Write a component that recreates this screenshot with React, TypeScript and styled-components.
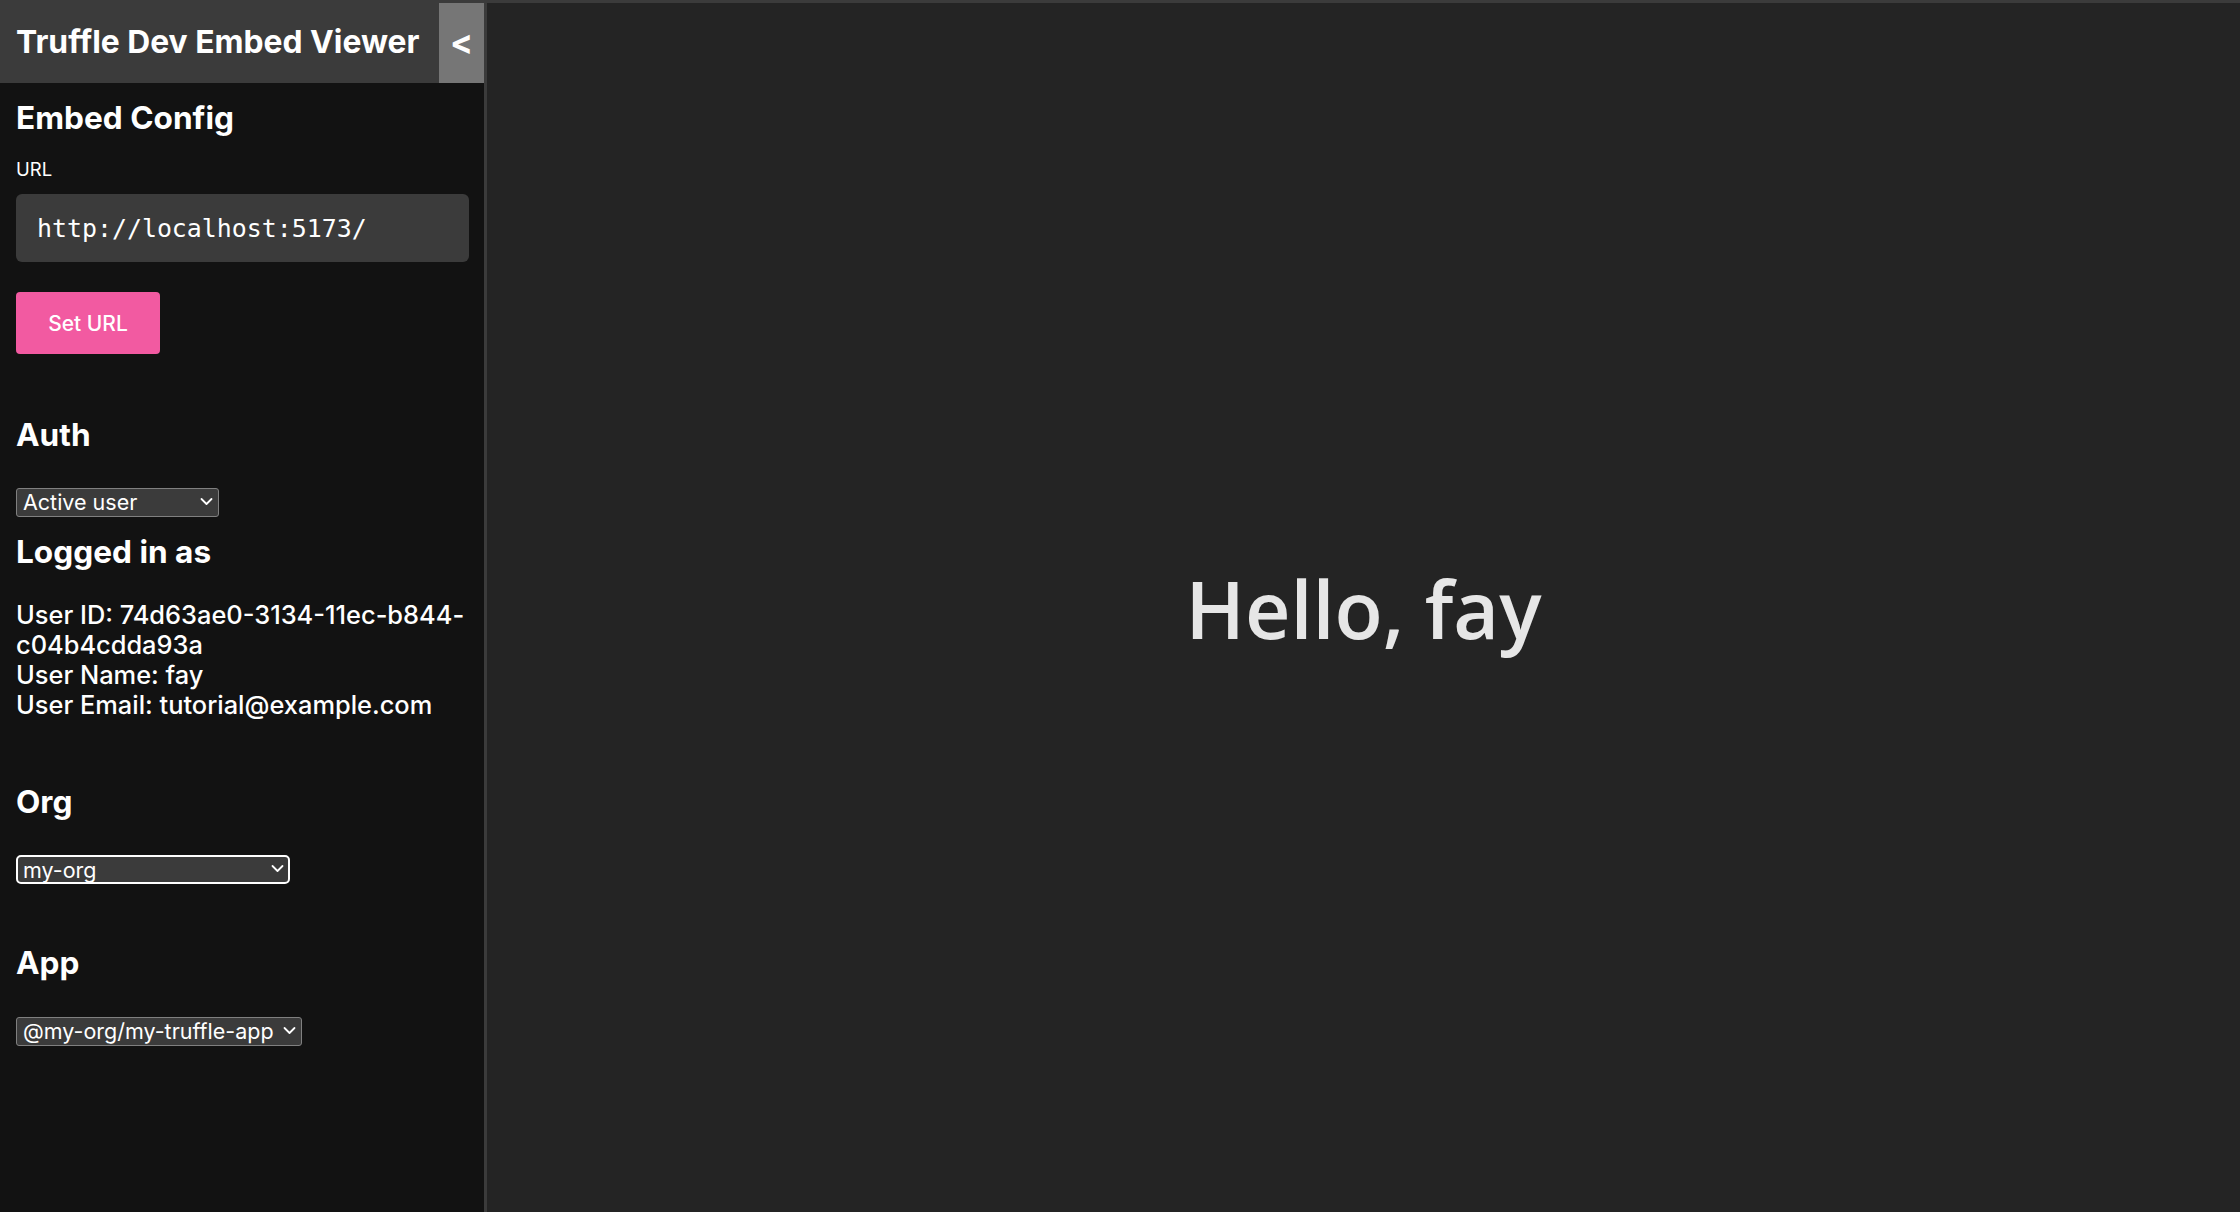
import React from "react";
import styled, { createGlobalStyle } from "styled-components";

const GlobalStyle = createGlobalStyle`
  html, body {
    margin: 0;
    padding: 0;
    height: 100%;
    background: #121212;
  }
  #root {
    height: 100%;
  }
  * {
    box-sizing: border-box;
  }
`;

const Page = styled.div`
  display: flex;
  height: 100vh;
  width: 100%;
  font-family: Inter, "Noto Sans", sans-serif;
  color: #ffffff;
`;

const Sidebar = styled.aside`
  width: 484px;
  flex-shrink: 0;
  background: #121212;
  display: flex;
  flex-direction: column;
`;

const Header = styled.header`
  height: 83px;
  background: #3b3b3b;
  display: flex;
  align-items: stretch;
  justify-content: space-between;
  padding-top: 3px;
`;

const Title = styled.h1`
  margin: 0;
  padding-left: 16px;
  font-size: 31.8px;
  font-weight: 700;
  display: flex;
  align-items: center;
  color: #ffffff;
  margin-top: -3px;
  white-space: nowrap;
`;

const CollapseButton = styled.button`
  width: 45px;
  border: none;
  background: #767676;
  color: #ffffff;
  font-family: Inter, "Noto Sans", sans-serif;
  font-size: 34px;
  font-weight: 700;
  padding: 0 0 4px 0;
  display: flex;
  align-items: center;
  justify-content: center;
  cursor: pointer;
`;

const Content = styled.div`
  padding: 0 15px 0 16px;
  display: flex;
  flex-direction: column;
  align-items: flex-start;
`;

const Heading = styled.h2<{ $top: number }>`
  margin: ${(p) => p.$top}px 0 0 0;
  font-size: 31.6px;
  line-height: 34px;
  font-weight: 700;
  color: #ffffff;
  white-space: nowrap;
`;

const Label = styled.label`
  margin-top: 24px;
  font-size: 18.5px;
  line-height: 20px;
  color: #ffffff;
`;

const UrlInput = styled.input`
  margin-top: 15px;
  width: 100%;
  height: 68px;
  border: none;
  border-radius: 6px;
  background: #3b3b3b;
  color: #ffffff;
  padding: 0 0 0 21px;
  font-family: "DejaVu Sans Mono", "Liberation Mono", monospace;
  font-size: 24.9px;
  outline: none;
`;

const PrimaryButton = styled.button`
  margin-top: 30px;
  width: 144px;
  height: 62px;
  border: none;
  border-radius: 4px;
  background: #f25aa1;
  color: #ffffff;
  font-family: Inter, "Noto Sans", sans-serif;
  font-size: 21px;
  font-weight: 500;
  cursor: pointer;
`;

const SelectWrap = styled.div<{ $top: number; $width: number }>`
  position: relative;
  margin-top: ${(p) => p.$top}px;
  width: ${(p) => p.$width}px;
  height: 29px;
`;

const Select = styled.select<{ $focused?: boolean }>`
  appearance: none;
  -webkit-appearance: none;
  width: 100%;
  height: 100%;
  background: #3b3b3b;
  color: #ffffff;
  border: ${(p) => (p.$focused ? "2px solid #ffffff" : "1px solid #808080")};
  border-radius: ${(p) => (p.$focused ? "5px" : "3px")};
  font-family: Inter, "Noto Sans", sans-serif;
  font-size: 21.5px;
  padding: 0 0 0 ${(p) => (p.$focused ? "5px" : "6px")};
  line-height: 27px;
  outline: none;
`;

const Chevron = styled.svg`
  position: absolute;
  right: 6px;
  top: 9px;
  width: 13px;
  height: 9px;
  pointer-events: none;
`;

const Info = styled.div`
  margin-top: 31px;
  font-size: 25.4px;
  line-height: 30px;
  font-weight: 500;
  color: #ffffff;
  width: 100%;
`;

const Main = styled.main`
  flex: 1;
  background: #242424;
  border-top: 3px solid #3b3b3b;
  border-left: 3px solid #3b3b3b;
  display: flex;
  align-items: center;
  justify-content: center;
`;

const Greeting = styled.div`
  font-family: "Open Sans", "Noto Sans", sans-serif;
  font-size: 79px;
  font-weight: 600;
  color: #e6e6e6;
  margin-top: 2px;
`;

type DropdownProps = {
  top: number;
  width: number;
  value: string;
  options: string[];
  focused?: boolean;
};

function Dropdown({ top, width, value, options, focused }: DropdownProps) {
  return (
    <SelectWrap $top={top} $width={width}>
      <Select $focused={focused} defaultValue={value}>
        {options.map((o) => (
          <option key={o} value={o}>
            {o}
          </option>
        ))}
      </Select>
      <Chevron viewBox="0 0 13 9">
        <path d="M1.5 2 L6.5 7 L11.5 2" fill="none" stroke="#ffffff" strokeWidth="1.8" strokeLinecap="round" strokeLinejoin="round" />
      </Chevron>
    </SelectWrap>
  );
}

export default function App() {
  return (
    <>
      <GlobalStyle />
      <Page>
        <Sidebar>
          <Header>
            <Title>Truffle Dev Embed Viewer</Title>
            <CollapseButton>&lt;</CollapseButton>
          </Header>
          <Content>
            <Heading $top={18}>Embed Config</Heading>
            <Label>URL</Label>
            <UrlInput defaultValue="http://localhost:5173/" />
            <PrimaryButton>Set URL</PrimaryButton>

            <Heading $top={64}>Auth</Heading>
            <Dropdown top={36} width={203} value="Active user" options={["Active user", "Anonymous"]} />
            <Heading $top={18}>Logged in as</Heading>
            <Info>
              <div>User ID: 74d63ae0-3134-11ec-b844-c04b4cdda93a</div>
              <div>User Name: fay</div>
              <div>User Email: tutorial@example.com</div>
            </Info>

            <Heading $top={65}>Org</Heading>
            <Dropdown top={36} width={274} value="my-org" options={["my-org"]} focused />

            <Heading $top={62}>App</Heading>
            <Dropdown top={37} width={286} value="@my-org/my-truffle-app" options={["@my-org/my-truffle-app"]} />
          </Content>
        </Sidebar>
        <Main>
          <Greeting>Hello, fay</Greeting>
        </Main>
      </Page>
    </>
  );
}
